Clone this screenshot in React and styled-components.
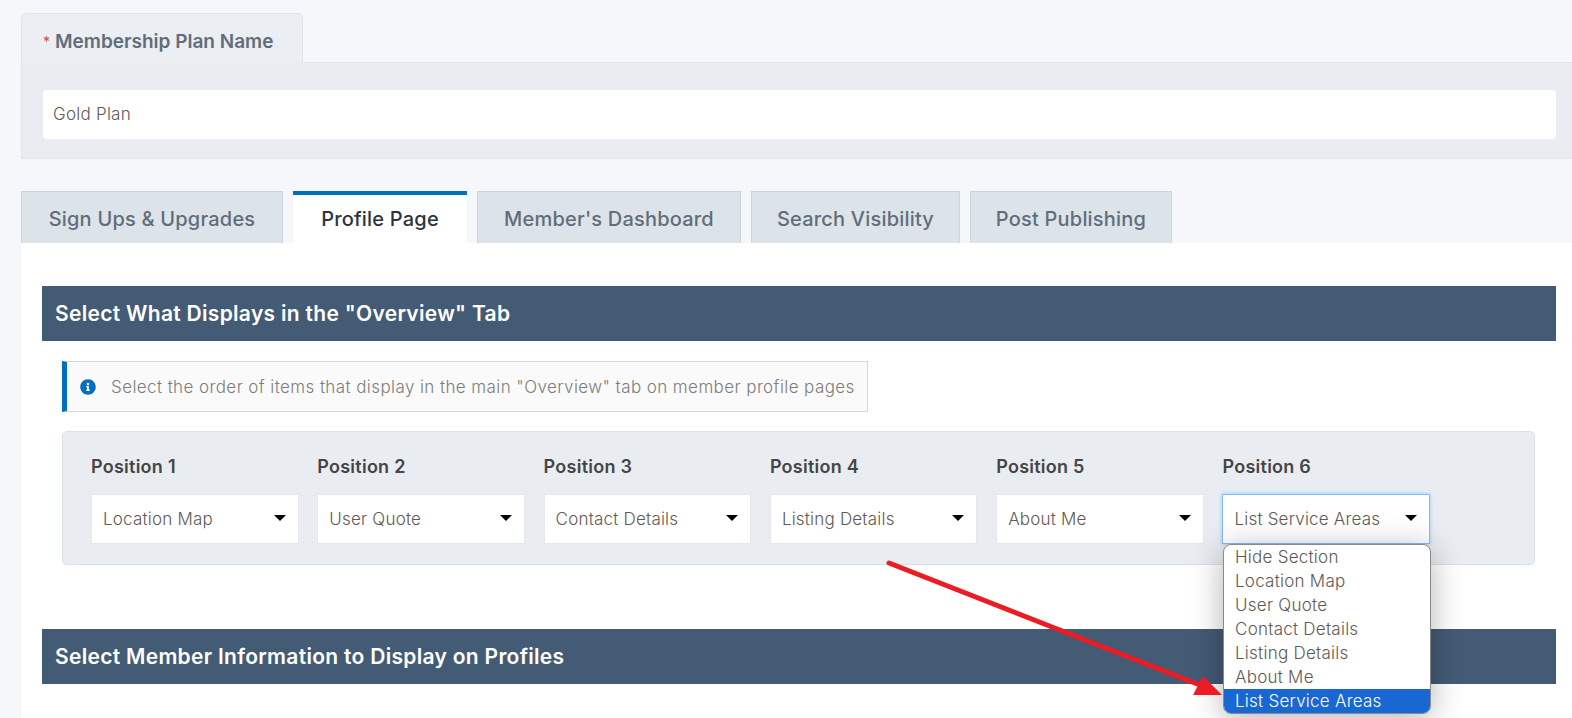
import React from "react";
import styled, { createGlobalStyle } from "styled-components";
import { FaInfoCircle } from "react-icons/fa";

const GlobalStyle = createGlobalStyle`
    html, body {
        margin: 0;
        height: 718px;
        overflow: hidden;
        background: #f5f7fb;
        font-family: "Inter", "Noto Sans", sans-serif;
    }
    * {
        box-sizing: border-box;
    }
`;

const Page = styled.div`
    position: relative;
    height: 718px;
    overflow: hidden;
    padding: 13px 0 0 21px;
`;

const PlanTab = styled.div`
    width: 282px;
    height: 50px;
    display: flex;
    align-items: center;
    gap: 5px;
    padding: 6px 0 0 21px;
    margin-bottom: -1px;
    position: relative;
    background: #ebeef3;
    border: 1px solid #dfe5ec;
    border-bottom: 0;
    border-radius: 5px 5px 0 0;
    color: #626d7b;
    font-size: 19px;
    font-weight: 600;
`;

const Required = styled.span`
    color: #c0504d;
    font-size: 14px;
    font-weight: 400;
`;

const PlanPanel = styled.div`
    height: 97px;
    padding: 27px 16px 0 21px;
    background: #e9edf2;
    border: 1px solid #dfe5ec;
    border-right: 0;
`;

const PlanInput = styled.div`
    height: 49px;
    display: flex;
    align-items: center;
    padding: 0 0 2px 10px;
    background: #fff;
    border-radius: 4px;
    color: #5f5a57;
    font-size: 17px;
    font-weight: 300;
    letter-spacing: 0.25px;
`;

const Tabs = styled.div`
    display: flex;
    gap: 10px;
    margin-top: 32px;
`;

const Tab = styled.div`
    width: ${({ $width }) => $width}px;
    height: 52px;
    display: flex;
    align-items: center;
    justify-content: center;
    padding-top: ${({ $active }) => ($active ? "0" : "2px")};
    font-size: 20px;
    font-weight: 500;
    letter-spacing: 0.2px;
    color: ${({ $active }) => ($active ? "#2b3442" : "#626d7b")};
    background: ${({ $active }) => ($active ? "#fff" : "#dce4ea")};
    border: ${({ $active }) => ($active ? "0" : "1px solid #c9d6e2")};
    border-top: ${({ $active }) => ($active ? "4px solid #0070bc" : "1px solid #c9d6e2")};
    border-bottom: 0;
`;

const Content = styled.div`
    height: 480px;
    padding: 43px 16px 0 21px;
    background: #fff;
`;

const SectionBar = styled.div`
    height: 55px;
    display: flex;
    align-items: center;
    padding-left: 13px;
    background: #435b75;
    color: #fff;
    font-size: 21px;
    font-weight: 600;
    letter-spacing: 0.3px;
`;

const Notice = styled.div`
    width: 806px;
    height: 51px;
    display: flex;
    align-items: center;
    gap: 15px;
    margin: 20px 0 0 20px;
    padding-left: 13px;
    background: #fafafa;
    border: 1px solid #d8d8d8;
    border-left: 5px solid #0070bc;
    color: #7d7d7d;
    font-size: 17px;
    font-weight: 300;
    letter-spacing: 0.41px;
    white-space: nowrap;
    svg {
        flex: none;
        color: #0070bc;
        font-size: 16px;
    }
`;

const PositionBox = styled.div`
    height: 134px;
    display: grid;
    grid-template-columns: repeat(6, 207.5px);
    column-gap: 18.8px;
    margin: 19px 21px 64px 20px;
    padding: 24px 0 0 28px;
    background: #e9edf2;
    border: 1px solid #d9dfe6;
    border-radius: 5px;
`;

const PositionField = styled.div`
    display: flex;
    flex-direction: column;
    gap: 17px;
`;

const PositionLabel = styled.div`
    height: 21px;
    color: #454545;
    font-size: 18px;
    font-weight: 600;
    letter-spacing: 0.25px;
`;

const Select = styled.div`
    height: 50px;
    display: flex;
    align-items: center;
    justify-content: space-between;
    padding: 0 12px 0 11px;
    background: #fff;
    border: 1px solid ${({ $open }) => ($open ? "#80bdff" : "#e4e7eb")};
    box-shadow: ${({ $open }) => ($open ? "0 0 4px rgba(0, 123, 255, 0.35)" : "none")};
    color: #5f5a57;
    font-size: 17px;
    font-weight: 300;
    letter-spacing: 0.2px;
`;

const Caret = styled.span`
    width: 0;
    height: 0;
    margin-bottom: 3px;
    border-left: 6px solid transparent;
    border-right: 6px solid transparent;
    border-top: 6px solid #000;
`;

const Dropdown = styled.ul`
    position: absolute;
    left: 1223px;
    top: 544px;
    width: 208px;
    margin: 0;
    padding: 0;
    list-style: none;
    overflow: hidden;
    background: #fff;
    border: 1px solid #8a8a8a;
    border-radius: 8px;
    box-shadow: 0 5px 32px rgba(0, 0, 0, 0.3);
`;

const Option = styled.li`
    height: 24px;
    display: flex;
    align-items: center;
    padding-left: 11px;
    font-size: 17px;
    font-weight: 300;
    letter-spacing: 0.25px;
    color: ${({ $selected }) => ($selected ? "#fff" : "#5f5a57")};
    background: ${({ $selected }) => ($selected ? "#1967d2" : "transparent")};
`;

const ArrowLayer = styled.svg`
    position: absolute;
    left: 0;
    top: 0;
    pointer-events: none;
`;

const positions = [
    "Location Map",
    "User Quote",
    "Contact Details",
    "Listing Details",
    "About Me",
    "List Service Areas",
];

const options = ["Hide Section", ...positions];

function App() {
    return (
        <Page>
            <GlobalStyle />
            <PlanTab>
                <Required>*</Required> Membership Plan Name
            </PlanTab>
            <PlanPanel>
                <PlanInput>Gold Plan</PlanInput>
            </PlanPanel>
            <Tabs>
                <Tab $width={262}>Sign Ups &amp; Upgrades</Tab>
                <Tab $width={174} $active>
                    Profile Page
                </Tab>
                <Tab $width={264}>Member's Dashboard</Tab>
                <Tab $width={209}>Search Visibility</Tab>
                <Tab $width={202}>Post Publishing</Tab>
            </Tabs>
            <Content>
                <SectionBar>Select What Displays in the "Overview" Tab</SectionBar>
                <Notice>
                    <FaInfoCircle />
                    Select the order of items that display in the main "Overview" tab on member profile pages
                </Notice>
                <PositionBox>
                    {positions.map((value, i) => (
                        <PositionField key={value}>
                            <PositionLabel>Position {i + 1}</PositionLabel>
                            <Select $open={i === 5}>
                                {value}
                                <Caret />
                            </Select>
                        </PositionField>
                    ))}
                </PositionBox>
                <SectionBar>Select Member Information to Display on Profiles</SectionBar>
            </Content>
            <Dropdown>
                {options.map((value) => (
                    <Option key={value} $selected={value === "List Service Areas"}>
                        {value}
                    </Option>
                ))}
            </Dropdown>
            <ArrowLayer width="1572" height="718" viewBox="0 0 1572 718">
                <line x1="889" y1="563" x2="1205" y2="687" stroke="#ed1c24" strokeWidth="5" strokeLinecap="round" />
                <polygon points="1222,695 1193,695 1203,676" fill="#ed1c24" />
            </ArrowLayer>
        </Page>
    );
}

export default App;
